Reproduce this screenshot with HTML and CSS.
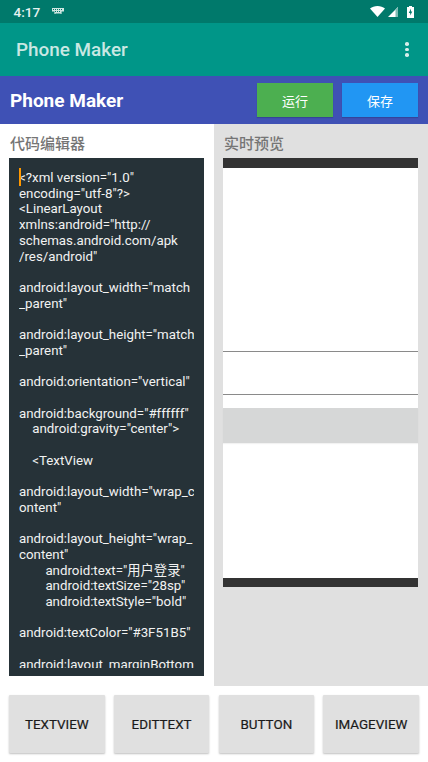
FILE: index.html
```html
<!DOCTYPE html>
<html lang="zh">
<head>
<meta charset="utf-8">
<title>Phone Maker</title>
<link rel="stylesheet" href="styles.css">
</head>
<body>
<div class="status">
  <span class="time">4:17</span>
  <svg class="kbd" width="12" height="7" viewBox="0 0 12 7"><path fill="#cfe6e1" d="M0 0h12v3.6H9.6V6H2.4V3.6H0z"/><path fill="#00796b" d="M1 1h1v1H1zM3 1h1v1H3zM5 1h1v1H5zM7 1h1v1H7zM9 1h1v1H9zM3 3h1v1H3zM5 3h1v1H5zM7 3h1v1H7zM3.5 5h5v.6h-5z"/></svg>
  <span class="spring"></span>
  <svg class="wifi" width="15" height="11" viewBox="0 0 15 11"><path fill="#fff" d="M0 2.6C2 .9 4.6 0 7.5 0S13 .9 15 2.6L7.5 11z"/></svg>
  <svg class="signal" width="10" height="10" viewBox="0 0 10 10"><path fill="#fff" d="M10 0v10H0z"/><path fill="#7fbcb5" d="M10 0v10H7.5V2.5z"/></svg>
  <svg class="battery" width="7" height="12" viewBox="0 0 7 12"><path fill="#fff" d="M2 0h3v1h2v11H0V1h2z"/><path fill="#00796b" d="M4 2.5 1.8 7h1.4v2.5L5.3 5.5H3.9z"/></svg>
</div>
<header class="appbar">
  <span class="apptitle">Phone Maker</span>
  <span class="dots"><i></i><i></i><i></i></span>
</header>
<div class="toolbar">
  <span class="brand">Phone Maker</span>
  <div class="actions">
    <button class="act run">运行</button>
    <button class="act save">保存</button>
  </div>
</div>
<main class="panels">
  <section class="panel left">
    <h2 class="label">代码编辑器</h2>
    <div class="editor"><span class="caret"></span><pre class="code">&lt;?xml version="1.0"
encoding="utf-8"?&gt;
&lt;LinearLayout
xmlns:android="http://
schemas.android.com/apk
/res/android"

android:layout_width="match
_parent"

android:layout_height="match
_parent"

android:orientation="vertical"

android:background="#ffffff"
    android:gravity="center"&gt;

    &lt;TextView

android:layout_width="wrap_c
ontent"

android:layout_height="wrap_
content"
        android:text="用户登录"
        android:textSize="28sp"
        android:textStyle="bold"

android:textColor="#3F51B5"

android:layout_marginBottom</pre></div>
  </section>
  <section class="panel right">
    <h2 class="label">实时预览</h2>
    <div class="preview">
      <div class="pbar"></div>
      <div class="pspace a"></div>
      <div class="pline"></div>
      <div class="pspace b"></div>
      <div class="pline"></div>
      <div class="pspace c"></div>
      <div class="pgrey"></div>
      <div class="pspace d"></div>
      <div class="pbar"></div>
    </div>
  </section>
</main>
<footer class="palette">
  <button class="pal">TEXTVIEW</button>
  <button class="pal">EDITTEXT</button>
  <button class="pal">BUTTON</button>
  <button class="pal">IMAGEVIEW</button>
</footer>
</body>
</html>
```
FILE: styles.css
```css
* { box-sizing: border-box; }
html, body { margin: 0; padding: 0; }
body { width: 428px; height: 762px; overflow: hidden; background: #fafafa; font-family: Roboto, "Noto Sans CJK SC", sans-serif; }
.status { height: 23px; background: #00796b; display: flex; align-items: center; padding: 0 14px 0 13.5px; color: #fff; }
.time { font-size: 13.6px; font-weight: 500; color: #e6f2f0; }
.kbd { margin-left: 12px; margin-top: -1px; }
.spring { flex: 1; }
.wifi { margin-right: 3px; }
.signal { margin-right: 9px; }
.appbar { height: 53px; background: #009688; display: flex; align-items: center; justify-content: space-between; padding: 0 19px 0 16px; }
.apptitle { font-size: 18.9px; font-weight: 500; color: #c9e8e3; }
.dots { display: flex; flex-direction: column; gap: 2.2px; }
.dots i { display: block; width: 3.6px; height: 3.6px; border-radius: 50%; background: #d5eeea; }
.toolbar { height: 48px; background: #3f51b5; display: flex; align-items: center; justify-content: space-between; padding: 0 10px; }
.brand { font-size: 19px; font-weight: 700; color: #fff; }
.actions { display: flex; gap: 9px; }
.act { width: 76px; height: 34px; border: 0; border-radius: 0; padding: 0; color: #fff; font-family: "Noto Sans CJK SC", sans-serif; font-size: 13px; box-shadow: 0 1px 1px rgba(0,0,0,.15); }
.run { background: #4caf50; }
.save { background: #2196f3; }
.panels { height: 562px; display: flex; }
.panel { width: 214px; padding: 9px 10px 10px 9px; }
.left { background: #fff; }
.right { background: #e0e0e0; }
.label { margin: 0 0 6px; padding-left: 1px; height: 19px; line-height: 19px; font-size: 15px; font-weight: 500; color: #757575; font-family: "Noto Sans CJK SC", sans-serif; }
.editor { position: relative; height: 518px; background: #263238; padding: 12px 10px 8px; overflow: hidden; }
.caret { position: absolute; left: 10px; top: 10px; width: 1.5px; height: 18px; background: #ff9800; }
.code { margin: 0; height: 100%; overflow: hidden; font-family: Roboto, "Noto Sans CJK SC", sans-serif; font-size: 13.3px; line-height: 15.7px; color: #f2f2f2; white-space: pre; }
.preview { height: 429px; background: #fff; display: flex; flex-direction: column; }
.pbar { height: 9.5px; background: #333; flex: none; }
.pline { height: 1px; background: #8a8a8a; flex: none; }
.pspace.a { height: 183px; }
.pspace.b { height: 42px; }
.pspace.c { height: 13px; }
.pgrey { height: 35px; background: #d6d7d7; box-shadow: 0 1px 1px rgba(0,0,0,.05); }
.pspace.d { flex: 1; }
.palette { height: 76px; display: grid; grid-template-columns: repeat(4, 95.6px); gap: 9.2px; padding: 9px 9px 9px; background: #fff; }
.pal { border: 0; background: #e0e0e0; height: 58px; padding: 0; border-radius: 1px; font-family: Roboto, sans-serif; font-size: 13.4px; font-weight: 400; color: #1a1a1a; -webkit-text-stroke: .2px #1a1a1a; box-shadow: 0 1px 2px rgba(0,0,0,.25); }
```
